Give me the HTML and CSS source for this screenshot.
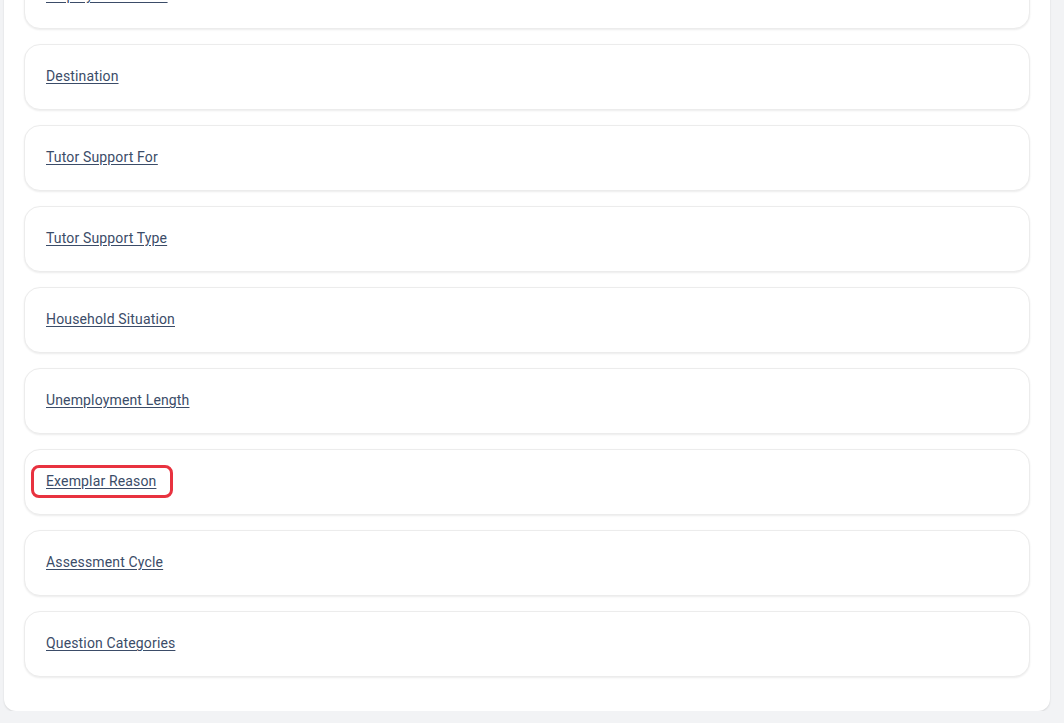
FILE: index.html
```html
<!DOCTYPE html>
<html lang="en">
<head>
<meta charset="utf-8">
<link rel="stylesheet" href="styles.css">
</head>
<body>
<main class="panel">
  <ul class="list">
    <li class="item"><a href="#">Employment Hours</a></li>
    <li class="item"><a href="#">Destination</a></li>
    <li class="item"><a href="#">Tutor Support For</a></li>
    <li class="item"><a href="#">Tutor Support Type</a></li>
    <li class="item"><a href="#">Household Situation</a></li>
    <li class="item"><a href="#">Unemployment Length</a></li>
    <li class="item"><a href="#" class="highlight">Exemplar Reason</a></li>
    <li class="item"><a href="#">Assessment Cycle</a></li>
    <li class="item"><a href="#">Question Categories</a></li>
  </ul>
</main>
</body>
</html>
```
FILE: styles.css
```css
html, body {
  margin: 0;
  padding: 0;
  background: #f2f3f5;
  font-family: Roboto, "Liberation Sans", sans-serif;
  overflow: hidden;
}
.panel {
  width: 1046px;
  margin: -57px 0 0 4px;
  box-sizing: border-box;
  background: #fff;
  border-radius: 0 0 12px 12px;
  box-shadow: 0 1px 2px rgba(0,0,0,0.12);
  padding: 20px 20px 34px;
}
.list {
  list-style: none;
  margin: 0;
  padding: 0;
  display: flex;
  flex-direction: column;
  gap: 15px;
}
.item {
  height: 66px;
  box-sizing: border-box;
  border: 1px solid #ececec;
  border-radius: 16px;
  box-shadow: 0 1px 2px rgba(0,0,0,0.08);
  background: #fff;
  display: flex;
  align-items: center;
  padding: 0 21px;
}
.item a {
  color: #3b4c68;
  font-size: 14px;
  letter-spacing: 0.15px;
  text-decoration: underline;
  text-underline-offset: 2px;
  position: relative;
  top: -1px;
}
.highlight::after {
  content: "";
  position: absolute;
  left: -15px;
  right: -17px;
  top: -8px;
  bottom: -9px;
  border: 3px solid #e8323f;
  border-radius: 8px;
}
```
